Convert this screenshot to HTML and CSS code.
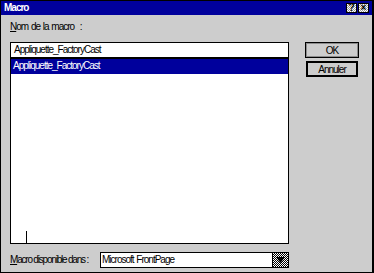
FILE: index.html
```html
<!DOCTYPE html>
<html lang="fr">
<head>
  <meta charset="UTF-8" />
  <meta name="viewport" content="width=device-width, initial-scale=1.0" />
  <title>Macro</title>
  <link rel="stylesheet" href="styles.css">
</head>
<body>
  <div class="dialog">
    <div class="titlebar">
      <span class="title">Macro</span>
      <div class="title-btns">
        <span class="tbtn">?</span>
        <span class="tbtn">&times;</span>
      </div>
    </div>

    <div class="content">
      <div class="main">
        <label class="label"><u>N</u>om de la macro&nbsp; :</label>
        <div class="input">Appliquette_FactoryCast</div>

        <div class="list">
          <div class="item selected">Appliquette_FactoryCast</div>
          <span class="caret"></span>
        </div>

        <div class="bottom">
          <label class="label bottom-label"><u>M</u>acro disponible dans&nbsp;:</label>
          <div class="combo">
            <span class="combo-text">Microsoft FrontPage</span>
            <span class="combo-btn">
              <svg width="9" height="6" viewBox="0 0 9 6"><path d="M0 0H9L4.5 6Z" fill="#000"/></svg>
            </span>
          </div>
        </div>
      </div>

      <div class="side">
        <button class="btn btn-ok">OK</button>
        <button class="btn btn-cancel">Annuler</button>
      </div>
    </div>
  </div>
</body>
</html>
```

FILE: styles.css
```css
html, body {
  margin: 0;
  padding: 0;
  background: #cdcdcd;
}
.dialog {
  width: 374px;
  height: 273px;
  box-sizing: border-box;
  border: 1px solid #000;
  border-right-width: 2px;
  background: #cdcdcd;
  font-family: "Liberation Sans", Arial, sans-serif;
  font-size: 10px;
  letter-spacing: -1px;
  word-spacing: 1px;
  color: #000;
  white-space: nowrap;
}
.titlebar {
  height: 14px;
  background: #00009c;
  display: flex;
  align-items: center;
  justify-content: space-between;
  padding: 0 3px;
}
.title {
  color: #fff;
  font-weight: bold;
  line-height: 14px;
}
.title-btns {
  display: flex;
  gap: 1px;
}
.tbtn {
  width: 11px;
  height: 10px;
  box-sizing: border-box;
  border: 1px solid #000;
  background: repeating-conic-gradient(#9a9a9a 0 25%, #fff 0 50%) 0 0 / 2px 2px;
  font-size: 10px;
  font-weight: bold;
  line-height: 8px;
  text-align: center;
  letter-spacing: 0;
  color: #000;
}
.content {
  display: flex;
  gap: 16px;
  padding-left: 9px;
}
.main {
  width: 279px;
  display: flex;
  flex-direction: column;
}
.label {
  display: block;
  line-height: 14px;
  padding-top: 5px;
}
.input {
  margin-top: 8px;
  height: 16px;
  box-sizing: border-box;
  border: 1px solid #000;
  background: #fff;
  padding-left: 3px;
  line-height: 14px;
}
.list {
  position: relative;
  height: 186px;
  box-sizing: border-box;
  border: 1px solid #000;
  background: #fff;
}
.item {
  height: 15px;
  line-height: 14px;
  padding-left: 2px;
}
.item.selected {
  background: #00009c;
  color: #fff;
}
.caret {
  position: absolute;
  left: 15px;
  bottom: 0;
  width: 1px;
  height: 12px;
  background: #000;
}
.bottom {
  margin-top: 8px;
  display: flex;
  align-items: center;
}
.bottom-label {
  flex: none;
  width: 90px;
  padding-top: 0;
  letter-spacing: -1.2px;
  word-spacing: 0;
}
.combo {
  flex: 1;
  height: 16px;
  box-sizing: border-box;
  border: 1px solid #000;
  background: #fff;
  display: flex;
}
.combo-text {
  flex: 1;
  padding-left: 1px;
  line-height: 14px;
}
.combo-btn {
  width: 15px;
  border-left: 1px solid #000;
  background: repeating-conic-gradient(#000 0 25%, #fff 0 50%) 0 0 / 2px 2px;
  display: flex;
  align-items: center;
  justify-content: center;
}
.side {
  display: flex;
  flex-direction: column;
  padding-top: 27px;
  gap: 3px;
}
.btn {
  font: inherit;
  letter-spacing: inherit;
  color: #000;
  background: #cdcdcd;
  width: 54px;
  height: 16px;
  padding: 0;
  border: 1px solid #000;
  box-shadow: inset 1px 1px 0 #8c8c8c, inset -1px -1px 0 #8c8c8c;
}
.btn-cancel {
  width: 52px;
  margin-left: 1px;
  border-width: 2px;
  box-shadow: none;
}
```
